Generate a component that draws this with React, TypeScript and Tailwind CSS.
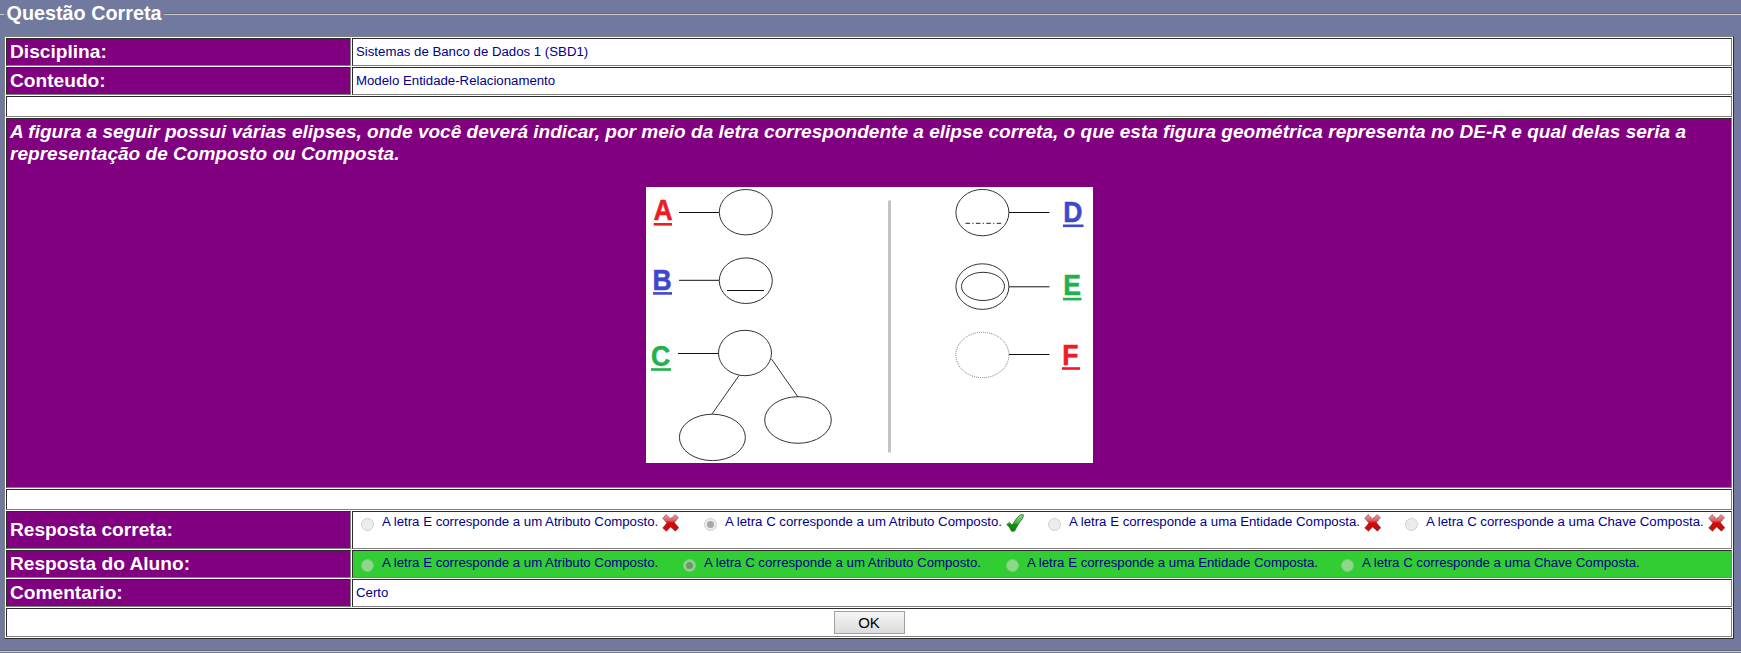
import React, { type ReactNode } from "react";

function Radio({ checked = false, green = false }: { checked?: boolean; green?: boolean }) {
  return (
    <span
      role="radio"
      aria-checked={checked}
      className={
        green
          ? "flex size-[13px] shrink-0 items-center justify-center rounded-full border border-[#7cc87c] bg-[#8cd98c]"
          : "flex size-[13px] shrink-0 items-center justify-center rounded-full border border-[#d0d0d0] bg-[#ececec]"
      }
    >
      {checked && (
        <span className={green ? "size-[7px] rounded-full bg-[#6f946f]" : "size-[7px] rounded-full bg-[#a8a8a8]"} />
      )}
    </span>
  );
}

function Cross() {
  return (
    <svg viewBox="0 0 18 18" className="size-[18px] shrink-0">
      <defs>
        <linearGradient id="cross" x1="0" y1="0" x2="0" y2="1">
          <stop offset="0" stopColor="#f49a9a" />
          <stop offset="0.35" stopColor="#e35a5a" />
          <stop offset="0.5" stopColor="#d20808" />
          <stop offset="1" stopColor="#c80c0c" />
        </linearGradient>
      </defs>
      <path
        d="M4 .7 8.6 4.8 13 .7 16.4 3.6 12.4 8.6 16.8 13.8 13.4 17.2 8.6 13 4.4 17.3 .7 14 4.9 9 .7 4.2Z"
        fill="url(#cross)"
        stroke="#6b4444"
        strokeWidth="0.8"
        strokeDasharray="1.6 .6"
      />
    </svg>
  );
}

function Check() {
  return (
    <svg viewBox="0 0 18 18" className="size-[18px] shrink-0">
      <defs>
        <linearGradient id="check" x1="0" y1="0" x2="0" y2="1">
          <stop offset="0" stopColor="#8bd88b" />
          <stop offset="0.5" stopColor="#43b543" />
          <stop offset="0.6" stopColor="#079407" />
          <stop offset="1" stopColor="#0b870b" />
        </linearGradient>
      </defs>
      <path
        d="M.8 10.4 3.4 8.4 6.2 11.2Q10 4 14.3.7L17.4.8 16.8 4Q12 9.5 8.6 17.1L5.6 17.3Q3.8 12.6.8 10.4Z"
        fill="url(#check)"
        stroke="#2f652f"
        strokeWidth="0.8"
      />
    </svg>
  );
}

const cell = "border border-t-[#2c2c2c] border-l-[#2c2c2c] border-r-[#808080] border-b-[#808080]";

function Row({ label, height, green, children }: { label: string; height: string; green?: boolean; children: ReactNode }) {
  return (
    <div className={`flex gap-px ${height}`}>
      <div className={`${cell} flex w-[345px] shrink-0 items-center bg-[#800080] pl-[3px] text-[19.15px] font-bold text-white`}>
        {label}
      </div>
      <div
        className={`${cell} flex min-w-0 flex-1 pl-[3px] text-[13.22px] leading-[15px] text-[#00008b] ${green ? "bg-[#32cd32]" : "bg-white"}`}
      >
        {children}
      </div>
    </div>
  );
}

const options = [
  { text: "A letra E corresponde a um Atributo Composto.", right: false, step: "w-[343px]", plain: "w-[322px]" },
  { text: "A letra C corresponde a um Atributo Composto.", right: true, step: "w-[344px]", plain: "w-[323px]" },
  { text: "A letra E corresponde a uma Entidade Composta.", right: false, step: "w-[357px]", plain: "w-[335px]" },
  { text: "A letra C corresponde a uma Chave Composta.", right: false, step: "w-[325px]", plain: "w-[325px]" },
];

function Options({ marked }: { marked: boolean }) {
  return (
    <div className={marked ? "flex pt-[2px] pl-[5px]" : "flex pt-[4px] pl-[5px]"}>
      {options.map((o) => (
        <div key={o.text} className={`flex shrink-0 whitespace-nowrap ${marked ? o.step : o.plain}`}>
          <div className="pt-[4px] pr-[8px]">
            <Radio checked={o.right} green={!marked} />
          </div>
          <span>{o.text}</span>
          {marked && <span className="pl-[4px]">{o.right ? <Check /> : <Cross />}</span>}
        </div>
      ))}
    </div>
  );
}

function Letter({ x, y, x1, x2, color, children }: { x: number; y: number; x1: number; x2: number; color: string; children: string }) {
  return (
    <g fill={color}>
      <text
        transform={`translate(${x} ${y}) scale(0.9 1)`}
        fontSize="29.5"
        fontWeight="bold"
        stroke={color}
        strokeWidth="0.5"
      >
        {children}
      </text>
      <rect x={x1} y={y + 2.6} width={x2 - x1} height="2.6" />
    </g>
  );
}

function Diagram() {
  return (
    <svg viewBox="0 0 447 276" className="block h-[276px] w-[447px] bg-white font-['Liberation_Sans',Arial,sans-serif]">
      <g fill="none" stroke="#333" strokeWidth="1">
        <ellipse cx="99.8" cy="25.2" rx="26.5" ry="22.7" />
        <ellipse cx="99.8" cy="93.7" rx="26.5" ry="22.8" />
        <ellipse cx="99" cy="166" rx="26.5" ry="22.7" />
        <ellipse cx="66.4" cy="250.4" rx="33" ry="23.2" />
        <ellipse cx="152" cy="233" rx="33.3" ry="23.3" />
        <ellipse cx="336.4" cy="25.6" rx="26.5" ry="23.2" />
        <ellipse cx="336.4" cy="99.6" rx="26.5" ry="22.8" />
        <ellipse cx="337" cy="99.4" rx="21.5" ry="14.1" />
        <ellipse cx="336.4" cy="168" rx="26.5" ry="22.7" stroke="#777" strokeDasharray="1 1" />
        <path d="M33 25.5H73M33 93.3H73M81 103.5H118M32 166.5H72M363 25.5H403.5M363 99.8H403.5M363 167.5H403.5" stroke="#111" />
        <path d="M93 188.5 66 227M125.5 172 152 210" />
        <path d="M319.5 36.3H356" stroke="#222" strokeDasharray="4.5 2.3 1.2 2.4" />
      </g>
      <rect x="242" y="13.5" width="3" height="252" fill="#c3c3c3" />
      <Letter x={7.4} y={33.4} x1={7.7} x2={26} color="#ed1c24">A</Letter>
      <Letter x={6.5} y={102.5} x1={7} x2={26} color="#3f48cc">B</Letter>
      <Letter x={5.1} y={178.6} x1={5} x2={25} color="#22b14c">C</Letter>
      <Letter x={417.2} y={34.9} x1={417} x2={437.5} color="#3f48cc">D</Letter>
      <Letter x={417.3} y={108.2} x1={417} x2={435.5} color="#22b14c">E</Letter>
      <Letter x={416.3} y={177.6} x1={416} x2={434} color="#ed1c24">F</Letter>
    </svg>
  );
}

export default function App() {
  return (
    <div className="flex h-[653px] w-full flex-col overflow-hidden bg-[#71799e] font-['Liberation_Sans',Arial,sans-serif]">
      <div className="flex h-[27px] shrink-0 items-center text-[19.8px] font-bold text-white">
        <div className="h-[2px] w-[4px] border-t border-[#808080] bg-[#c8c8c8]" />
        <h1 className="w-[160px] pb-[2px] pl-[2.5px] leading-[24px] whitespace-nowrap">Questão Correta</h1>
        <div className="h-[2px] flex-1 border-t border-[#696969] bg-[#c8c8c8]" />
      </div>
      <div className="mt-[9px] ml-[4px] flex h-[603px] w-[1730px] shrink-0 flex-col gap-px border border-t-[#808080] border-l-[#808080] border-r-[#2c2c2c] border-b-[#2c2c2c] bg-white p-px">
        <Row label="Disciplina:" height="h-[28px]">
          <span className="pt-[5px]">Sistemas de Banco de Dados 1 (SBD1)</span>
        </Row>
        <Row label="Conteudo:" height="h-[28px]">
          <span className="pt-[5px]">Modelo Entidade-Relacionamento</span>
        </Row>
        <div className={`${cell} h-[21px]`} />
        <div className={`${cell} h-[370px] bg-[#800080] px-[3px] pt-[2px]`}>
          <p className="text-[19.06px] leading-[22px] font-bold text-white italic">
            A figura a seguir possui várias elipses, onde você deverá indicar, por meio da letra correspondente a elipse
            correta, o que esta figura geométrica representa no DE-R e qual delas seria a representação de Composto ou
            Composta.
          </p>
          <div className="pt-[22px] pl-[636px]">
            <Diagram />
          </div>
        </div>
        <div className={`${cell} h-[21px]`} />
        <Row label="Resposta correta:" height="h-[38px]">
          <Options marked />
        </Row>
        <Row label="Resposta do Aluno:" height="h-[28px]" green>
          <Options marked={false} />
        </Row>
        <Row label="Comentario:" height="h-[28px]">
          <span className="pt-[5px]">Certo</span>
        </Row>
        <div className={`${cell} flex h-[29px] items-start justify-center pt-[2px]`}>
          <button className="h-[23px] w-[71px] border border-[#a0a0a0] bg-linear-to-b from-[#f5f5f5] to-[#dcdcdc] pt-px text-[15px] leading-[20px] text-black">
            OK
          </button>
        </div>
      </div>
      <div className="mt-[11px] h-[2px] shrink-0 border-t border-[#696969] bg-[#c8c8c8]" />
    </div>
  );
}
